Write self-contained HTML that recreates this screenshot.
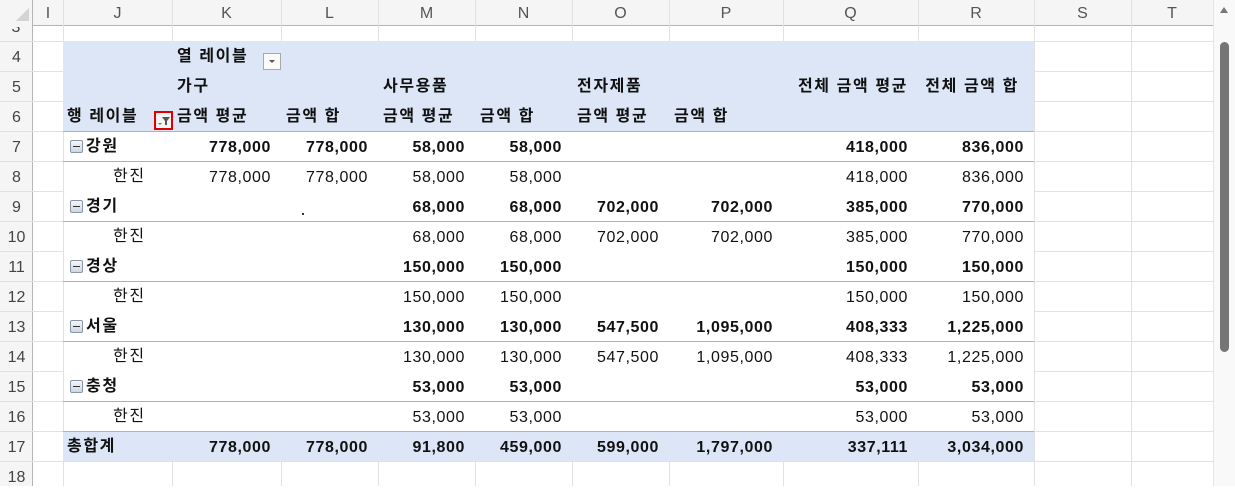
<!DOCTYPE html>
<html><head><meta charset="utf-8">
<style>
*{margin:0;padding:0;box-sizing:border-box}
body{width:1235px;height:486px;overflow:hidden;background:#fff;position:relative;font-family:"Liberation Sans","Noto Sans CJK KR",sans-serif;font-size:16px;color:#111}
.a{position:absolute}
.hl{position:absolute;height:1px;background:#e1e1e1}
.vl{position:absolute;width:1px;background:#e1e1e1}
.ch{position:absolute;top:0;height:26px;line-height:28px;text-align:center;color:#555;font-size:16px}
.rn{position:absolute;left:0;width:33px;text-align:center;color:#444;line-height:34px;height:30px;font-size:16px}
.t{position:absolute;line-height:34px;height:30px;white-space:nowrap;letter-spacing:0.6px}
.k{letter-spacing:1.6px}
.r{text-align:right}
.b{font-weight:bold}
.bl{position:absolute;left:63px;width:971px;height:1px;background:#95b3e3}
.ic{position:absolute;left:70px;width:13px;height:13px;border:1px solid #8a96a8;border-radius:2px;background:linear-gradient(#f4f6fa,#cfd6e0)}
.ic:after{content:"";position:absolute;left:2px;right:2px;top:5px;height:1px;background:#333}
</style></head><body>
<div class="a" style="left:0;top:0;width:1213px;height:26px;background:#f5f5f5;border-bottom:1px solid #b5b5b5"></div>
<div class="a" style="left:0;top:0;width:33px;height:486px;background:#f5f5f5;border-right:1px solid #b5b5b5"></div>
<svg class="a" style="left:16px;top:8px" width="14" height="14"><polygon points="13,0 13,13 0,13" fill="#d4d4d4"/></svg>
<div class="vl" style="left:63px;top:0;height:486px"></div>
<div class="vl" style="left:172px;top:0;height:41px"></div>
<div class="vl" style="left:281px;top:0;height:41px"></div>
<div class="vl" style="left:378px;top:0;height:41px"></div>
<div class="vl" style="left:475px;top:0;height:41px"></div>
<div class="vl" style="left:572px;top:0;height:41px"></div>
<div class="vl" style="left:669px;top:0;height:41px"></div>
<div class="vl" style="left:783px;top:0;height:41px"></div>
<div class="vl" style="left:918px;top:0;height:41px"></div>
<div class="vl" style="left:172px;top:461px;height:25px"></div>
<div class="vl" style="left:281px;top:461px;height:25px"></div>
<div class="vl" style="left:378px;top:461px;height:25px"></div>
<div class="vl" style="left:475px;top:461px;height:25px"></div>
<div class="vl" style="left:572px;top:461px;height:25px"></div>
<div class="vl" style="left:669px;top:461px;height:25px"></div>
<div class="vl" style="left:783px;top:461px;height:25px"></div>
<div class="vl" style="left:918px;top:461px;height:25px"></div>
<div class="vl" style="left:1034px;top:0;height:486px"></div>
<div class="vl" style="left:1131px;top:0;height:486px"></div>
<div class="ch" style="left:33px;width:30px">I</div>
<div class="ch" style="left:63px;width:109px">J</div>
<div class="ch" style="left:172px;width:109px">K</div>
<div class="ch" style="left:281px;width:97px">L</div>
<div class="ch" style="left:378px;width:97px">M</div>
<div class="ch" style="left:475px;width:97px">N</div>
<div class="ch" style="left:572px;width:97px">O</div>
<div class="ch" style="left:669px;width:114px">P</div>
<div class="ch" style="left:783px;width:135px">Q</div>
<div class="ch" style="left:918px;width:116px">R</div>
<div class="ch" style="left:1034px;width:97px">S</div>
<div class="ch" style="left:1131px;width:82px">T</div>
<div class="hl" style="left:0;top:41px;width:1213px"></div>
<div class="hl" style="left:0;top:71px;width:63px"></div><div class="hl" style="left:1034px;top:71px;width:179px"></div>
<div class="hl" style="left:0;top:101px;width:63px"></div><div class="hl" style="left:1034px;top:101px;width:179px"></div>
<div class="hl" style="left:0;top:131px;width:63px"></div><div class="hl" style="left:1034px;top:131px;width:179px"></div>
<div class="hl" style="left:0;top:161px;width:63px"></div><div class="hl" style="left:1034px;top:161px;width:179px"></div>
<div class="hl" style="left:0;top:191px;width:63px"></div><div class="hl" style="left:1034px;top:191px;width:179px"></div>
<div class="hl" style="left:0;top:221px;width:63px"></div><div class="hl" style="left:1034px;top:221px;width:179px"></div>
<div class="hl" style="left:0;top:251px;width:63px"></div><div class="hl" style="left:1034px;top:251px;width:179px"></div>
<div class="hl" style="left:0;top:281px;width:63px"></div><div class="hl" style="left:1034px;top:281px;width:179px"></div>
<div class="hl" style="left:0;top:311px;width:63px"></div><div class="hl" style="left:1034px;top:311px;width:179px"></div>
<div class="hl" style="left:0;top:341px;width:63px"></div><div class="hl" style="left:1034px;top:341px;width:179px"></div>
<div class="hl" style="left:0;top:371px;width:63px"></div><div class="hl" style="left:1034px;top:371px;width:179px"></div>
<div class="hl" style="left:0;top:401px;width:63px"></div><div class="hl" style="left:1034px;top:401px;width:179px"></div>
<div class="hl" style="left:0;top:431px;width:63px"></div><div class="hl" style="left:1034px;top:431px;width:179px"></div>
<div class="hl" style="left:0;top:461px;width:1213px"></div>
<div class="rn" style="top:41px">4</div><div class="rn" style="top:71px">5</div><div class="rn" style="top:101px">6</div>
<div class="rn" style="top:131px">7</div><div class="rn" style="top:161px">8</div><div class="rn" style="top:191px">9</div>
<div class="rn" style="top:221px">10</div><div class="rn" style="top:251px">11</div><div class="rn" style="top:281px">12</div>
<div class="rn" style="top:311px">13</div><div class="rn" style="top:341px">14</div><div class="rn" style="top:371px">15</div>
<div class="rn" style="top:401px">16</div><div class="rn" style="top:431px">17</div><div class="rn" style="top:461px">18</div>
<div class="a" style="left:0;top:27px;width:33px;height:14px;background:#f5f5f5;border-right:1px solid #b5b5b5;overflow:hidden;text-align:center;color:#444;line-height:14px;font-size:16px"><span style="position:relative;top:-6px">3</span></div>
<div class="a" style="left:63px;top:41px;width:971px;height:90px;background:#dce6f7"></div>
<div class="a" style="left:63px;top:431px;width:971px;height:30px;background:#dce6f7"></div>
<div class="bl" style="top:131px"></div>
<div class="bl" style="top:161px"></div>
<div class="bl" style="top:221px"></div>
<div class="bl" style="top:281px"></div>
<div class="bl" style="top:341px"></div>
<div class="bl" style="top:401px"></div>
<div class="bl" style="top:431px"></div>
<div class="t b k" style="left:177px;top:40px">열 레이블</div>
<div class="a" style="left:263px;top:53px;width:18px;height:17px;border:1px solid #a8a8a8;background:#fafafa"><svg width="16" height="15" style="position:absolute;left:0;top:0"><polygon points="5,6 11,6 8,9" fill="#555"/></svg></div>
<div class="t b k" style="left:177px;top:70px">가구</div>
<div class="t b k" style="left:383px;top:70px">사무용품</div>
<div class="t b k" style="left:577px;top:70px">전자제품</div>
<div class="t b r k" style="left:783px;width:125px;top:70px">전체 금액 평균</div>
<div class="t b r k" style="left:918px;width:101px;top:70px">전체 금액 합</div>
<div class="t b k" style="left:67px;top:100px">행 레이블</div>
<div class="a" style="left:154px;top:111px;width:19px;height:19px;border:2px solid #e00000;background:#f4f4f4"><svg width="15" height="15" style="position:absolute;left:0;top:0"><polygon points="2,10 6,10 4,12" fill="#777"/><polygon points="6,4 14,4 11,8 11,12 9,12 9,8" fill="#555"/></svg></div>
<div class="t b k" style="left:177px;top:100px">금액 평균</div>
<div class="t b k" style="left:286px;top:100px">금액 합</div>
<div class="t b k" style="left:383px;top:100px">금액 평균</div>
<div class="t b k" style="left:480px;top:100px">금액 합</div>
<div class="t b k" style="left:577px;top:100px">금액 평균</div>
<div class="t b k" style="left:674px;top:100px">금액 합</div>
<div class="ic" style="top:140px"></div><div class="ic" style="top:200px"></div><div class="ic" style="top:260px"></div><div class="ic" style="top:320px"></div><div class="ic" style="top:380px"></div>
<div class="t b k" style="left:86px;top:130px">강원</div>
<div class="t k" style="left:113px;top:160px">한진</div>
<div class="t b k" style="left:86px;top:190px">경기</div>
<div class="t k" style="left:113px;top:220px">한진</div>
<div class="t b k" style="left:86px;top:250px">경상</div>
<div class="t k" style="left:113px;top:280px">한진</div>
<div class="t b k" style="left:86px;top:310px">서울</div>
<div class="t k" style="left:113px;top:340px">한진</div>
<div class="t b k" style="left:86px;top:370px">충청</div>
<div class="t k" style="left:113px;top:400px">한진</div>
<div class="t b k" style="left:67px;top:430px">총합계</div>
<div class="a" style="left:302px;top:213px;width:2px;height:2px;background:#333"></div>
<div class="t b r" style="left:172px;width:99px;top:131px">778,000</div>
<div class="t b r" style="left:281px;width:87px;top:131px">778,000</div>
<div class="t b r" style="left:378px;width:87px;top:131px">58,000</div>
<div class="t b r" style="left:475px;width:87px;top:131px">58,000</div>
<div class="t b r" style="left:783px;width:125px;top:131px">418,000</div>
<div class="t b r" style="left:918px;width:106px;top:131px">836,000</div>
<div class="t r" style="left:172px;width:99px;top:161px">778,000</div>
<div class="t r" style="left:281px;width:87px;top:161px">778,000</div>
<div class="t r" style="left:378px;width:87px;top:161px">58,000</div>
<div class="t r" style="left:475px;width:87px;top:161px">58,000</div>
<div class="t r" style="left:783px;width:125px;top:161px">418,000</div>
<div class="t r" style="left:918px;width:106px;top:161px">836,000</div>
<div class="t b r" style="left:378px;width:87px;top:191px">68,000</div>
<div class="t b r" style="left:475px;width:87px;top:191px">68,000</div>
<div class="t b r" style="left:572px;width:87px;top:191px">702,000</div>
<div class="t b r" style="left:669px;width:104px;top:191px">702,000</div>
<div class="t b r" style="left:783px;width:125px;top:191px">385,000</div>
<div class="t b r" style="left:918px;width:106px;top:191px">770,000</div>
<div class="t r" style="left:378px;width:87px;top:221px">68,000</div>
<div class="t r" style="left:475px;width:87px;top:221px">68,000</div>
<div class="t r" style="left:572px;width:87px;top:221px">702,000</div>
<div class="t r" style="left:669px;width:104px;top:221px">702,000</div>
<div class="t r" style="left:783px;width:125px;top:221px">385,000</div>
<div class="t r" style="left:918px;width:106px;top:221px">770,000</div>
<div class="t b r" style="left:378px;width:87px;top:251px">150,000</div>
<div class="t b r" style="left:475px;width:87px;top:251px">150,000</div>
<div class="t b r" style="left:783px;width:125px;top:251px">150,000</div>
<div class="t b r" style="left:918px;width:106px;top:251px">150,000</div>
<div class="t r" style="left:378px;width:87px;top:281px">150,000</div>
<div class="t r" style="left:475px;width:87px;top:281px">150,000</div>
<div class="t r" style="left:783px;width:125px;top:281px">150,000</div>
<div class="t r" style="left:918px;width:106px;top:281px">150,000</div>
<div class="t b r" style="left:378px;width:87px;top:311px">130,000</div>
<div class="t b r" style="left:475px;width:87px;top:311px">130,000</div>
<div class="t b r" style="left:572px;width:87px;top:311px">547,500</div>
<div class="t b r" style="left:669px;width:104px;top:311px">1,095,000</div>
<div class="t b r" style="left:783px;width:125px;top:311px">408,333</div>
<div class="t b r" style="left:918px;width:106px;top:311px">1,225,000</div>
<div class="t r" style="left:378px;width:87px;top:341px">130,000</div>
<div class="t r" style="left:475px;width:87px;top:341px">130,000</div>
<div class="t r" style="left:572px;width:87px;top:341px">547,500</div>
<div class="t r" style="left:669px;width:104px;top:341px">1,095,000</div>
<div class="t r" style="left:783px;width:125px;top:341px">408,333</div>
<div class="t r" style="left:918px;width:106px;top:341px">1,225,000</div>
<div class="t b r" style="left:378px;width:87px;top:371px">53,000</div>
<div class="t b r" style="left:475px;width:87px;top:371px">53,000</div>
<div class="t b r" style="left:783px;width:125px;top:371px">53,000</div>
<div class="t b r" style="left:918px;width:106px;top:371px">53,000</div>
<div class="t r" style="left:378px;width:87px;top:401px">53,000</div>
<div class="t r" style="left:475px;width:87px;top:401px">53,000</div>
<div class="t r" style="left:783px;width:125px;top:401px">53,000</div>
<div class="t r" style="left:918px;width:106px;top:401px">53,000</div>
<div class="t b r" style="left:172px;width:99px;top:431px">778,000</div>
<div class="t b r" style="left:281px;width:87px;top:431px">778,000</div>
<div class="t b r" style="left:378px;width:87px;top:431px">91,800</div>
<div class="t b r" style="left:475px;width:87px;top:431px">459,000</div>
<div class="t b r" style="left:572px;width:87px;top:431px">599,000</div>
<div class="t b r" style="left:669px;width:104px;top:431px">1,797,000</div>
<div class="t b r" style="left:783px;width:125px;top:431px">337,111</div>
<div class="t b r" style="left:918px;width:106px;top:431px">3,034,000</div>
<div class="a" style="left:1213px;top:0;width:22px;height:486px;background:#f9f9f9;border-left:1px solid #e6e6e6"></div>
<svg class="a" style="left:1219px;top:6px" width="10" height="8"><polygon points="5,1 9,7 1,7" fill="#777"/></svg>
<div class="a" style="left:1220px;top:42px;width:9px;height:310px;background:#757575;border-radius:5px"></div>
</body></html>
